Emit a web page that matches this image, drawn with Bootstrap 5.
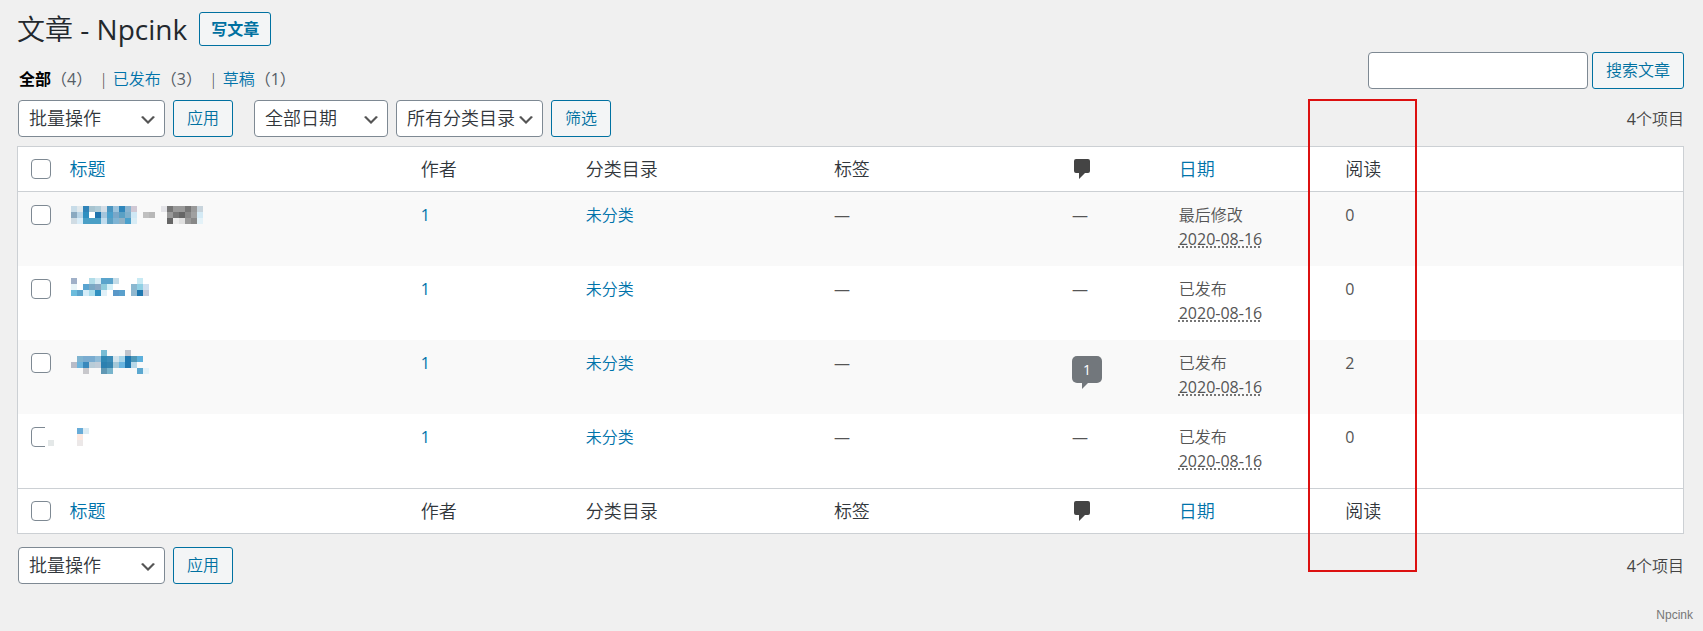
<!DOCTYPE html>
<html lang="zh-CN">
<head>
<meta charset="utf-8">
<meta name="viewport" content="width=device-width, initial-scale=1">
<title>文章 - Npcink</title>
<link href="https://cdn.jsdelivr.net/npm/bootstrap@5.3.0/dist/css/bootstrap.min.css" rel="stylesheet">
<style>
  body {
    background: #f0f0f0;
    color: #444;
    font-family: "Open Sans", "Noto Sans CJK SC", sans-serif;
    font-weight: 350;
    font-size: 16px;
    line-height: 24px;
  }
  a { color: #0073aa; text-decoration: none; }
  .wrap { padding: 12px 19px 0 17px; }
  .heading { gap: 12px; margin-bottom: 6px; }
  h1 { font-size: 28px; font-weight: 350; line-height: 34px; color: #23282d; }
  .latin, abbr { font-weight: 400; }
  .btn-wp {
    --bs-btn-color: #0071a1;
    --bs-btn-bg: #f3f5f6;
    --bs-btn-border-color: #0071a1;
    --bs-btn-border-radius: 3px;
    --bs-btn-padding-x: 13px;
    --bs-btn-padding-y: 0;
    --bs-btn-line-height: 35px;
    --bs-btn-font-weight: 350;
    --bs-btn-hover-color: #016087;
    --bs-btn-hover-bg: #f1f1f1;
    --bs-btn-hover-border-color: #016087;
    white-space: nowrap;
  }
  .btn-add { --bs-btn-padding-x: 11px; --bs-btn-line-height: 32px; --bs-btn-font-weight: 600; }
  .views { padding: 15px 0 0 2px; }
  .views b { color: #000; font-weight: 700; }
  .views .tally { color: #555d66; font-weight: 400; }
  .views .sep { padding: 0 5px 0 7px; }
  .field { height: 37px; border: 1px solid #7e8993; border-radius: 4px; }
  .search-field { width: 220px; }
  .form-select.field {
    width: 147px;
    padding: 0 24px 0 10px;
    font-size: 18px;
    font-weight: 350;
    line-height: 35px;
    color: #32373c;
    background: #fff url("data:image/svg+xml,%3Csvg xmlns='http://www.w3.org/2000/svg' viewBox='0 0 20 20'%3E%3Cpath fill='%23555' d='M5 6l5 5 5-5 2 1-7 7-7-7 2-1z'/%3E%3C/svg%3E") no-repeat right 6px top 9px / 20px 20px;
  }
  .form-select.date-pick { width: 134px; margin-left: 21px; }
  .bar { padding: 9px 0 9px 1px; }
  .bar-bottom { padding: 13px 0 24px 1px; }
  .posts {
    --bs-table-bg: #fff;
    --bs-table-color: #555;
    table-layout: fixed;
    border: 1px solid #ccd0d4;
    color: #555;
    margin: 0;
  }
  .posts > :not(caption) > * > * { padding: 11px 10px 15px; border: 0; vertical-align: top; }
  .posts > thead > tr > *, .posts > tfoot > tr > * {
    padding: 10px;
    font-size: 18px;
    font-weight: 350;
    color: #32373c;
    vertical-align: middle;
  }
  .posts > thead > tr > * { border-bottom: 1px solid #ccd0d4; }
  .posts > tfoot > tr > * { border-top: 1px solid #ccd0d4; }
  .posts > tbody > tr:nth-child(odd) > * { --bs-table-bg: #f9f9f9; background: #f9f9f9; }
  .posts .pick { padding-left: 13px; padding-right: 0; position: relative; }
  .posts > tbody .pick { padding-top: 13px; }
  .posts .form-check-input { display: block; width: 20px; height: 20px; margin: 0; border: 1px solid #7e8993; border-radius: 4px; }
  .posts > tbody .name { padding-top: 10px; padding-bottom: 10px; }
  .name svg { display: block; }
  .w-pick { width: 42px; } .w-author { width: 9.9%; } .w-cat { width: 14.9%; } .w-tag { width: 14.3%; }
  .w-talk { width: 6.4%; } .w-date { width: 10%; } .w-read { width: 20.9%; }
  abbr { cursor: inherit; text-underline-offset: 2px; }
  .smudge::after {
    content: "";
    position: absolute;
    left: 27px; top: 12px;
    width: 10px; height: 22px;
    background: linear-gradient(#e4e8e8, #e4e8e8) 3px 14px / 6px 6px no-repeat #fff;
  }
  .bubble {
    display: block;
    position: relative;
    width: 30px;
    margin-top: 5px;
    border-radius: 5px;
    background: #72777c;
    color: #fff;
    font-size: 14px;
    font-weight: 400;
    line-height: 27px;
    text-align: center;
  }
  .bubble::after {
    content: "";
    position: absolute;
    left: 10px; top: 26px;
    border-style: solid;
    border-width: 7px 7px 0 0;
    border-color: #72777c transparent;
  }
  .marker { position: absolute; top: 8px; bottom: 36px; right: 267px; width: 109px; border: 2px solid #dc1010; pointer-events: none; }
  .sign { padding-right: 10px; font: 12px/14px "Liberation Sans", sans-serif; color: #777; }
</style>
</head>
<body>
<main class="wrap">
  <div class="heading d-flex align-items-center">
    <h1 class="m-0">文章 <span class="latin">- Npcink</span></h1>
    <a class="btn btn-wp btn-add" href="#">写文章</a>
  </div>

  <div class="d-flex justify-content-between align-items-start">
    <nav class="views d-flex">
      <a href="#"><b>全部</b><span class="tally">（4）</span></a>
      <span class="sep">|</span>
      <a href="#">已发布<span class="tally">（3）</span></a>
      <span class="sep">|</span>
      <a href="#">草稿<span class="tally">（1）</span></a>
    </nav>
    <form class="d-flex gap-1" role="search">
      <input type="search" class="form-control field search-field" aria-label="搜索文章">
      <button type="button" class="btn btn-wp">搜索文章</button>
    </form>
  </div>

  <div class="position-relative">
    <div class="bar d-flex align-items-center">
      <select class="form-select field me-2" aria-label="批量操作"><option>批量操作</option></select>
      <button type="button" class="btn btn-wp">应用</button>
      <select class="form-select field date-pick me-2" aria-label="日期"><option>全部日期</option></select>
      <select class="form-select field me-2" aria-label="分类目录"><option>所有分类目录</option></select>
      <button type="button" class="btn btn-wp">筛选</button>
      <span class="ms-auto"><span class="latin">4</span>个项目</span>
    </div>

    <table class="table posts">
      <thead>
        <tr>
          <th class="pick w-pick"><input class="form-check-input" type="checkbox" aria-label="全选"></th>
          <th><a href="#">标题</a></th>
          <th class="w-author">作者</th>
          <th class="w-cat">分类目录</th>
          <th class="w-tag">标签</th>
          <th class="w-talk"><svg class="d-block" width="22" height="22" viewBox="0 0 22 22" role="img" aria-label="评论"><path fill="#444" d="M4 1h12q2 0 2 2v10q0 2-2 2h-3l-6 6v-6H4q-2 0-2-2V3q0-2 2-2z"/></svg></th>
          <th class="w-date"><a href="#">日期</a></th>
          <th class="w-read">阅读</th>
        </tr>
      </thead>
      <tbody>
        <tr>
          <td class="pick"><input class="form-check-input" type="checkbox" aria-label="选择文章 1"></td>
          <td class="name"><svg width="140" height="28" data-top="4" data-cells="c8dce8 e0e8ec 2f83b8 a8c4d0 b0ccd8 d4dde6 4b95c0 9cc3dc 2f86bb 8ab4d0 d0c8d4 - - - - e4e4e8 757575 999999 999999 777777 999999 c8d4dc/8aa9c0 b8d4e6 2f8fc0 ffffff 1e73ad a5c5dc 4aa0cc 7aa7c8 5aa0c4 7fb0cc cfe8f5 - c0c0c0 b8b8b8 - - 999999 777777 666666 888888 a0a0a0 d4eaf5/d0dce4 d8ecf8 4a9fc6 4a9fc6 4a9fc6 c0dcee 5ba0c4 7fb4d4 8fb0c4 4aa0cc d8ecf5 - - - - - 666666 eeeeee e0e0e0 999999 888888 e4f2f8"></svg></td>
          <td class="latin"><a href="#">1</a></td><td><a href="#">未分类</a></td><td class="latin">—</td><td class="latin">—</td>
          <td>最后修改<br><abbr title="2020-08-16">2020-08-16</abbr></td><td class="latin">0</td>
        </tr>
        <tr>
          <td class="pick"><input class="form-check-input" type="checkbox" aria-label="选择文章 2"></td>
          <td class="name"><svg width="140" height="28" data-top="2" data-cells="a0b0c8 - - b0dce8 d8ecf4 5aa4cc 5aa4cc c4dce8 - - - c8eaf4 -/e8f4f8 - 5aa4d0 7aa8c4 8aa8c4 90ccdc d4f0f8 - - - 8ab8d0 90d0e4 d0e0f0/6cbcdc 5aa4cc d4ecf8 a8dcec 3090c0 e0f0f8 - 5a98c8 5aa0cc - 90b8d0 2078b0 c4ccdc"></svg></td>
          <td class="latin"><a href="#">1</a></td><td><a href="#">未分类</a></td><td class="latin">—</td><td class="latin">—</td>
          <td>已发布<br><abbr title="2020-08-16">2020-08-16</abbr></td><td class="latin">0</td>
        </tr>
        <tr>
          <td class="pick"><input class="form-check-input" type="checkbox" aria-label="选择文章 3"></td>
          <td class="name"><svg width="140" height="28" data-top="0" data-cells="- - - - - 78bcd4 - - - c0c4cc - - -/- 80b4d0 7aacd0 7aacd0 90bcd8 3088b4 3c8cb8 d4e4ec a8d4e8 2078b0 5098b8 5cb0dc -/b8bcc8 6cb4dc 3888bc b8ccd8 c0ccd8 2c80b0 3484b0 a4c8d8 68b4e0 2078b0 b8d8e8 - -/- - c8c8cc - - 6098b4 78b4cc - - - - 5ca8d0 e4f2f8"></svg></td>
          <td class="latin"><a href="#">1</a></td><td><a href="#">未分类</a></td><td class="latin">—</td><td><a class="bubble" href="#">1</a></td>
          <td>已发布<br><abbr title="2020-08-16">2020-08-16</abbr></td><td class="latin">2</td>
        </tr>
        <tr>
          <td class="pick smudge"><input class="form-check-input" type="checkbox" aria-label="选择文章 4"></td>
          <td class="name"><svg width="140" height="28" data-top="4" data-cells="- 68acd8 dcecf4/- fce8e0 -/- ece8e8 -"></svg></td>
          <td class="latin"><a href="#">1</a></td><td><a href="#">未分类</a></td><td class="latin">—</td><td class="latin">—</td>
          <td>已发布<br><abbr title="2020-08-16">2020-08-16</abbr></td><td class="latin">0</td>
        </tr>
      </tbody>
      <tfoot>
        <tr>
          <th class="pick"><input class="form-check-input" type="checkbox" aria-label="全选"></th>
          <th><a href="#">标题</a></th>
          <th>作者</th>
          <th>分类目录</th>
          <th>标签</th>
          <th><svg class="d-block" width="22" height="22" viewBox="0 0 22 22" role="img" aria-label="评论"><path fill="#444" d="M4 1h12q2 0 2 2v10q0 2-2 2h-3l-6 6v-6H4q-2 0-2-2V3q0-2 2-2z"/></svg></th>
          <th><a href="#">日期</a></th>
          <th>阅读</th>
        </tr>
      </tfoot>
    </table>

    <div class="bar-bottom d-flex align-items-center">
      <select class="form-select field me-2" aria-label="批量操作"><option>批量操作</option></select>
      <button type="button" class="btn btn-wp">应用</button>
      <span class="ms-auto"><span class="latin">4</span>个项目</span>
    </div>
    <div class="marker"></div>
  </div>
</main>
<footer class="sign text-end">Npcink</footer>

<script src="https://cdn.jsdelivr.net/npm/bootstrap@5.3.0/dist/js/bootstrap.bundle.min.js"></script>
<script>
  // Post titles are masked: each one is a mosaic of 6px cells, rows split by "/", "-" for an empty cell.
  document.querySelectorAll('svg[data-cells]').forEach(function (svg) {
    svg.dataset.cells.split('/').forEach(function (row, r) {
      row.split(' ').forEach(function (color, c) {
        if (color === '-') return;
        var cell = document.createElementNS('http://www.w3.org/2000/svg', 'rect');
        cell.setAttribute('x', 1 + c * 6);
        cell.setAttribute('y', Number(svg.dataset.top) + r * 6);
        cell.setAttribute('width', 6);
        cell.setAttribute('height', 6);
        cell.setAttribute('fill', '#' + color);
        svg.appendChild(cell);
      });
    });
  });
</script>
</body>
</html>
